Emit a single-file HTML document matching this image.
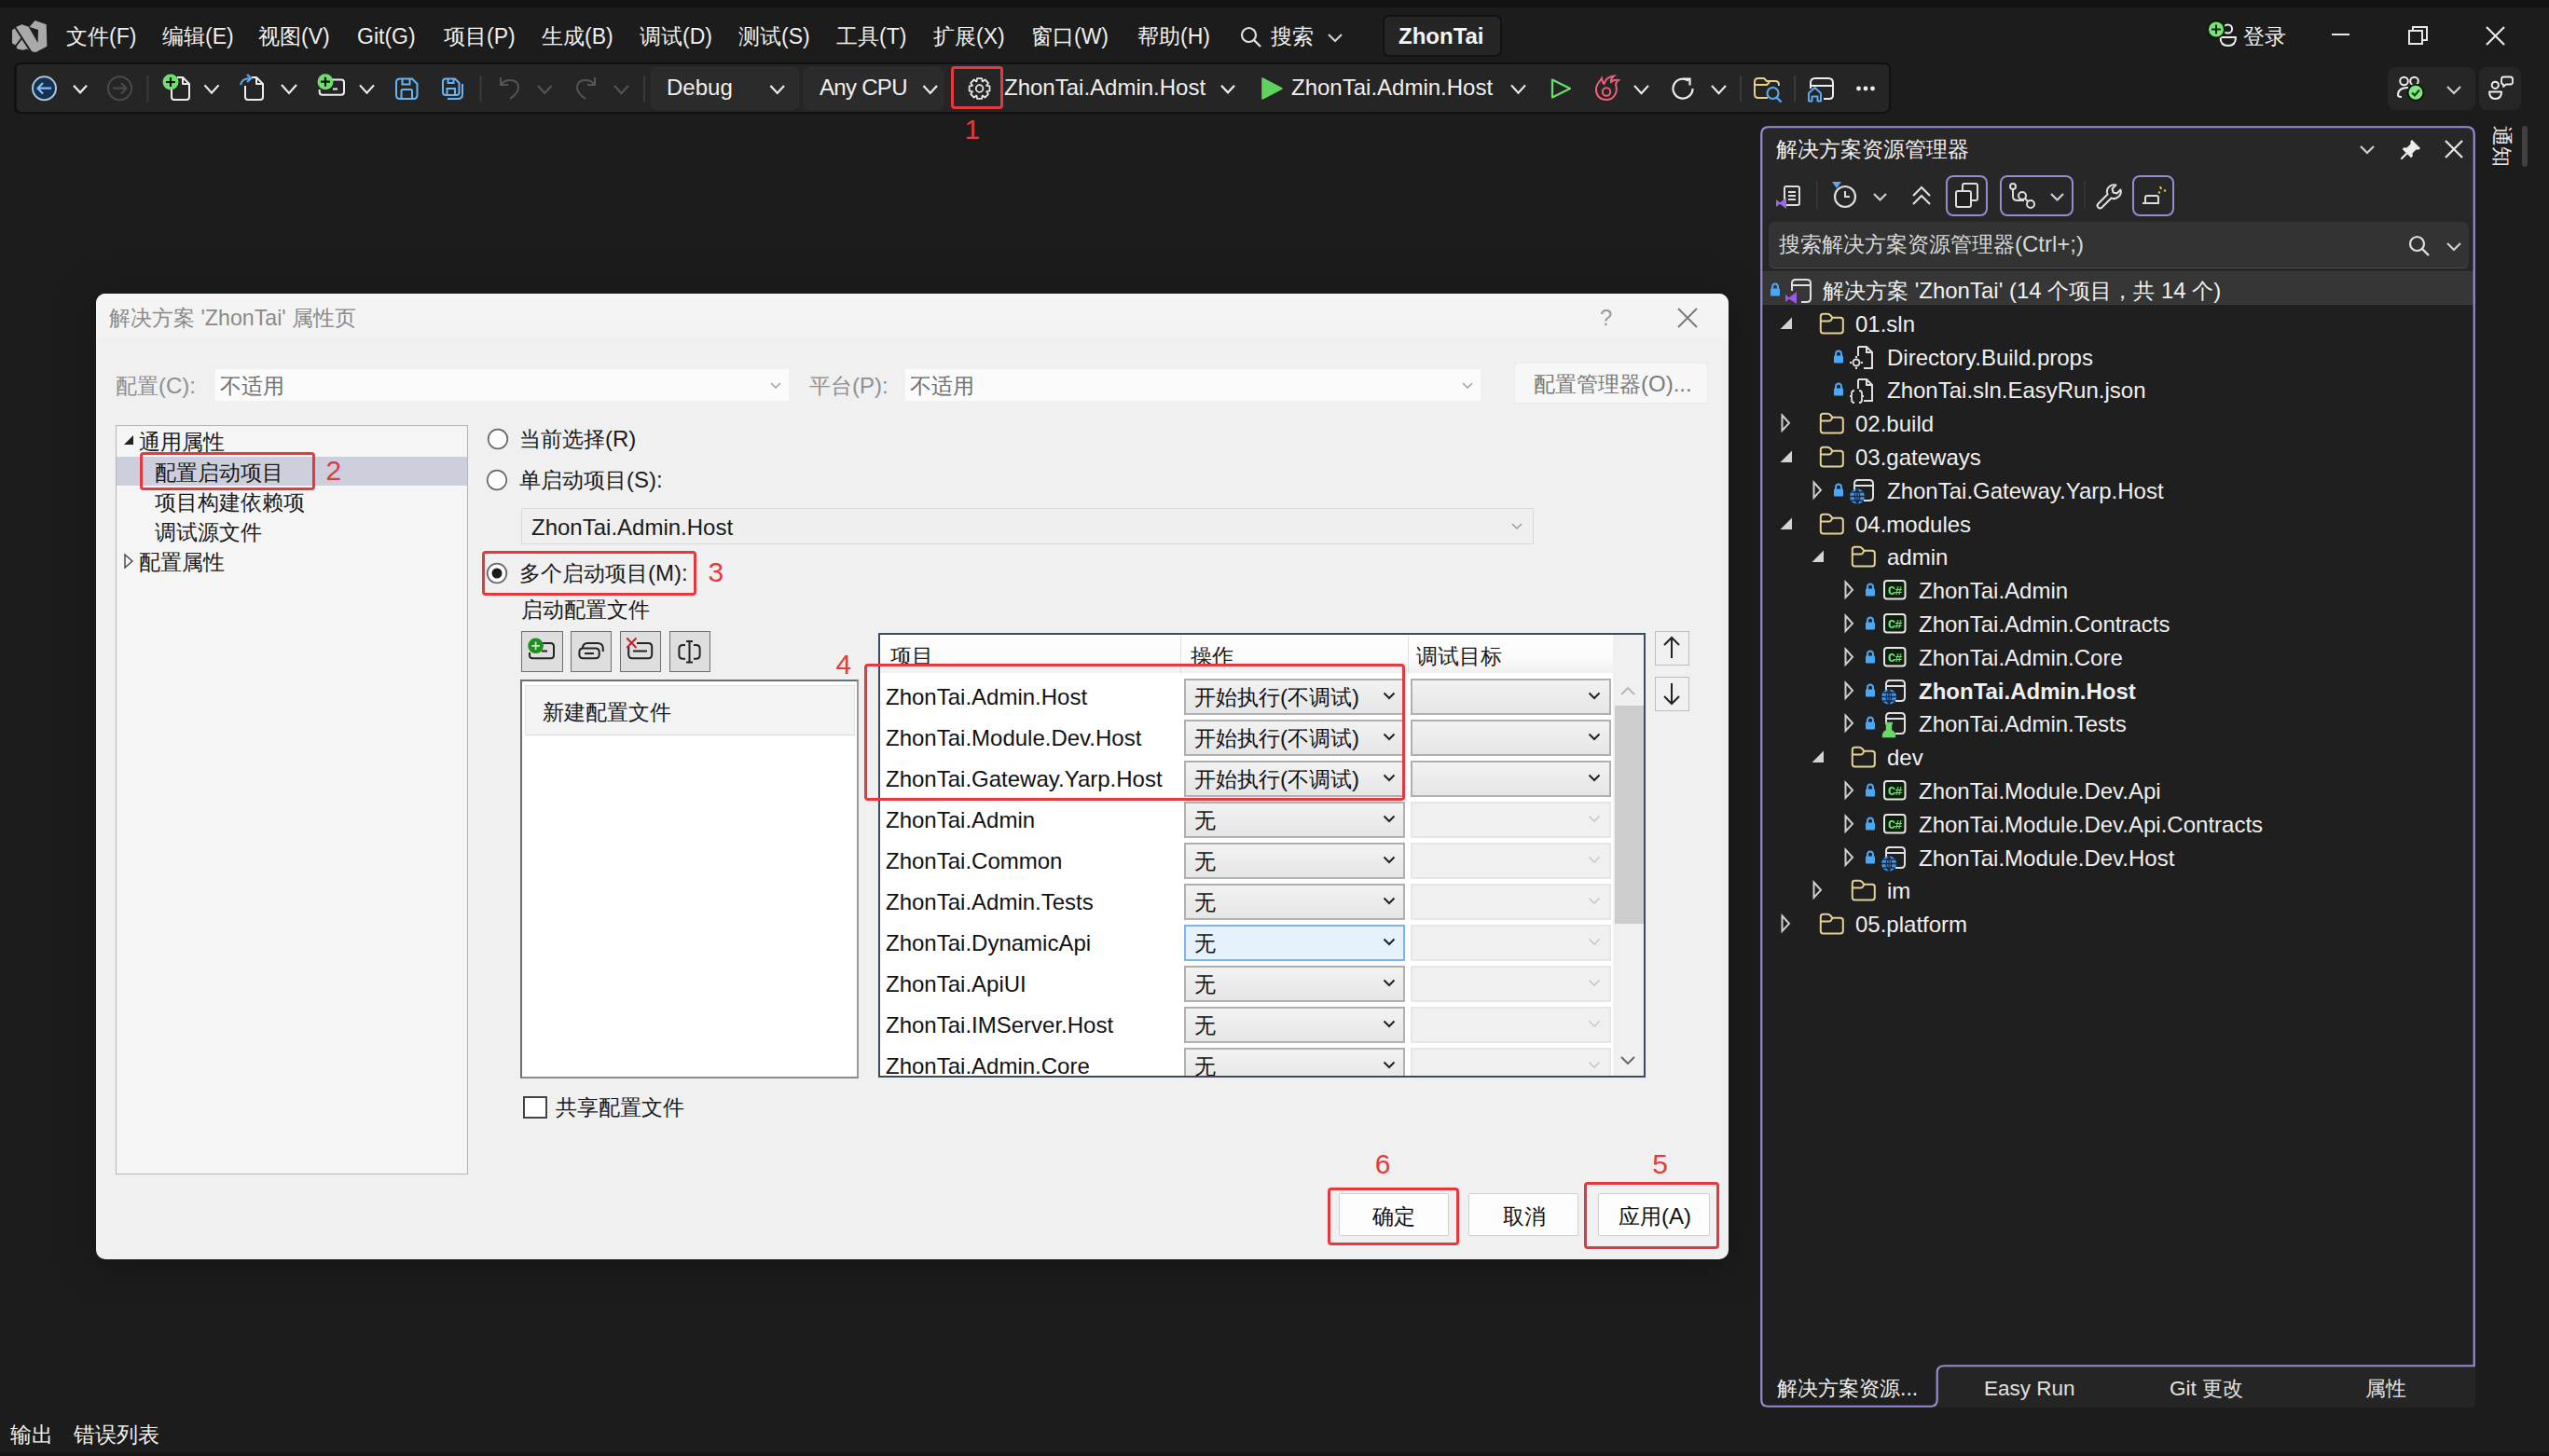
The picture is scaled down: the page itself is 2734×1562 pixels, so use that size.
<!DOCTYPE html>
<html><head><meta charset="utf-8">
<style>
html,body{margin:0;padding:0;width:2734px;height:1562px;overflow:hidden;background:#1c1c1c;font-family:"Liberation Sans",sans-serif;}
.a{position:absolute;}
.t{position:absolute;white-space:nowrap;line-height:1;}
svg{position:absolute;overflow:visible;}
</style></head><body>

<div class="a" style="left:0px;top:0px;width:2734px;height:8px;box-sizing:border-box;background:#121212"></div>
<svg style="left:0px;top:0px;" width="60" height="60" viewBox="0 0 60 60"><path fill="#a9a9a9" d="M13,32.5 L18,28.5 L23.5,26.3 L31.5,29 L37.5,22 L49.7,26.3 L50.4,49.7 L38.5,56 L35,55.5 L28.5,52.5 L25,53.8 L18.5,52.5 L17,48.5 L13,46.5 Z"/><path d="M15.6,28.5 L34,56.8" stroke="#1c1c1c" stroke-width="2"/><path d="M23.8,40.5 L15.5,51" stroke="#1c1c1c" stroke-width="2"/><path d="M11,31 L17,34 M11,47 L17,44" stroke="#1c1c1c" stroke-width="0"/><path fill="#1c1c1c" d="M30.5,28.5 L41,32 L40.6,46 Z"/></svg>
<div class="t" style="left:71px;top:28px;font-size:23px;color:#f0f0f0;"><span style="font-size:0.98em">文件</span>(F)</div>
<div class="t" style="left:174px;top:28px;font-size:23px;color:#f0f0f0;"><span style="font-size:0.98em">编辑</span>(E)</div>
<div class="t" style="left:277px;top:28px;font-size:23px;color:#f0f0f0;"><span style="font-size:0.98em">视图</span>(V)</div>
<div class="t" style="left:383px;top:28px;font-size:23px;color:#f0f0f0;">Git(G)</div>
<div class="t" style="left:476px;top:28px;font-size:23px;color:#f0f0f0;"><span style="font-size:0.98em">项目</span>(P)</div>
<div class="t" style="left:581px;top:28px;font-size:23px;color:#f0f0f0;"><span style="font-size:0.98em">生成</span>(B)</div>
<div class="t" style="left:686px;top:28px;font-size:23px;color:#f0f0f0;"><span style="font-size:0.98em">调试</span>(D)</div>
<div class="t" style="left:792px;top:28px;font-size:23px;color:#f0f0f0;"><span style="font-size:0.98em">测试</span>(S)</div>
<div class="t" style="left:897px;top:28px;font-size:23px;color:#f0f0f0;"><span style="font-size:0.98em">工具</span>(T)</div>
<div class="t" style="left:1001px;top:28px;font-size:23px;color:#f0f0f0;"><span style="font-size:0.98em">扩展</span>(X)</div>
<div class="t" style="left:1106px;top:28px;font-size:23px;color:#f0f0f0;"><span style="font-size:0.98em">窗口</span>(W)</div>
<div class="t" style="left:1220px;top:28px;font-size:23px;color:#f0f0f0;"><span style="font-size:0.98em">帮助</span>(H)</div>
<svg style="left:1330px;top:28px;" width="24" height="24" viewBox="0 0 24 24"><circle cx="9.5" cy="9.5" r="7.5" stroke="#e0e0e0" stroke-width="2.2" fill="none"/><path d="M15 15 L22 22" stroke="#e0e0e0" stroke-width="2.4"/></svg>
<div class="t" style="left:1363px;top:27px;font-size:24px;color:#f0f0f0;"><span style="font-size:0.96em">搜索</span></div>
<svg style="left:1424px;top:36px;" width="16" height="10" viewBox="0 0 16 10"><path d="M1 1 L8.0 8.0 L15 1" stroke="#d0d0d0" stroke-width="2.2" fill="none"/></svg>
<div class="a" style="left:1483px;top:16px;width:128px;height:45px;box-sizing:border-box;background:#252525;border-radius:7px;border:2px solid #121212"></div>
<div class="t" style="left:1500px;top:27px;font-size:24px;color:#f5f5f5;font-weight:bold">ZhonTai</div>
<svg style="left:0;top:0" width="2734" height="100"><circle cx="2389.5" cy="31" r="4.6" stroke="#eeeeee" stroke-width="2" fill="none"/><path d="M2381.5 40 H2398 Q2398 49 2389.75 49 Q2381.5 49 2381.5 40 Z" stroke="#eeeeee" stroke-width="2" fill="none" stroke-linejoin="round"/><circle cx="2377" cy="31.5" r="9" fill="#7ae27a" stroke="#0a1a0a" stroke-width="2"/><path d="M2377 26.5 V36.5 M2372 31.5 H2382" stroke="#0a2a0a" stroke-width="2"/></svg>
<div class="t" style="left:2406px;top:27px;font-size:24px;color:#f0f0f0;"><span style="font-size:0.96em">登录</span></div>
<div class="a" style="left:2501px;top:36px;width:19px;height:2px;box-sizing:border-box;background:#e8e8e8"></div>
<svg style="left:2583px;top:28px;" width="21" height="20" viewBox="0 0 21 20"><rect x="1" y="5" width="14" height="14" stroke="#e8e8e8" stroke-width="2" fill="none"/><path d="M5 5 V1 H20 V15 H15" stroke="#e8e8e8" stroke-width="2" fill="none"/></svg>
<svg style="left:2666px;top:28px;" width="21" height="21" viewBox="0 0 21 21"><path d="M1 1 L20 20 M20 1 L1 20" stroke="#e8e8e8" stroke-width="2.2"/></svg>
<div class="a" style="left:15px;top:67px;width:2013px;height:55px;box-sizing:border-box;background:#252525;border-radius:7px;border:2px solid #111111;border-left:3px solid #111"></div>
<svg style="left:0;top:0" width="2734" height="200"><circle cx="47.5" cy="94.7" r="12.5" stroke="#a9c4dc" stroke-width="2" fill="#173250"/><path d="M55 94.7 H40.5 M46 89 L40.5 94.7 L46 100.4" stroke="#7ec0ff" stroke-width="2.2" fill="none"/><path d="M79,91.65 L86.0,99.35 L93,91.65" stroke="#eeeeee" stroke-width="2.2" fill="none"/><circle cx="128.5" cy="94.7" r="12.5" stroke="#4a4a4a" stroke-width="2" fill="none"/><path d="M121 94.7 H135.5 M130 89 L135.5 94.7 L130 100.4" stroke="#4a4a4a" stroke-width="2.2" fill="none"/><path d="M158.5 81 V109" stroke="#3a3a3a" stroke-width="2"/><path d="M190 83 H196 L203 90 V104 Q203 107 200 107 H187 Q184 107 184 104 V96 M196 83 V90 H203" stroke="#eeeeee" stroke-width="2" fill="none" stroke-linejoin="round"/><circle cx="183" cy="88" r="8.5" fill="#6fe06f"/><path d="M183 83 V93 M178 88 H188" stroke="#111" stroke-width="2.2"/><path d="M219.5,91.375 L227.0,99.625 L234.5,91.375" stroke="#eeeeee" stroke-width="2.2" fill="none"/><path d="M270 83 H275 L282 90 V104 Q282 107 279 107 H266 Q263 107 263 104 V92 M275 83 V90 H282" stroke="#eeeeee" stroke-width="2" fill="none" stroke-linejoin="round"/><path d="M258 91 Q259 84 269 84 M265 80 L269.5 84 L265 88" stroke="#5ca8ec" stroke-width="2.2" fill="none"/><path d="M302,91.1 L310.0,99.9 L318,91.1" stroke="#eeeeee" stroke-width="2.2" fill="none"/><path d="M354 85.5 H366 Q369 85.5 369 88.5 V98.8 Q369 101.8 366 101.8 H345.7 Q342.7 101.8 342.7 98.8 V96 M357 95.5 H362" stroke="#eeeeee" stroke-width="2" fill="none"/><circle cx="349" cy="87.7" r="8.5" fill="#6fe06f"/><path d="M349 82.7 V92.7 M344 87.7 H354" stroke="#111" stroke-width="2.2"/><path d="M386,91.375 L393.5,99.625 L401,91.375" stroke="#eeeeee" stroke-width="2.2" fill="none"/><path d="M429 84.5 H442 L447.5 90 V102 Q447.5 106 443.5 106 H429 Q425 106 425 102 V88.5 Q425 84.5 429 84.5 Z M431.5 84.5 V90.5 H439.5 V84.5 M430.5 106 V97.5 Q430.5 96 432 96 H440.5 Q442 96 442 97.5 V106" stroke="#6ab4f4" stroke-width="2" fill="none"/><path d="M478 84.5 H488 L492.5 89 V99 Q492.5 102 489.5 102 H478 Q475 102 475 99 V87.5 Q475 84.5 478 84.5 Z M480.5 84.5 V89 H486.5 V84.5 M479.5 102 V95 H488 V102 M496 90 V101 Q496 106 491 106 H480" stroke="#6ab4f4" stroke-width="2" fill="none"/><path d="M515.5 81 V109" stroke="#3a3a3a" stroke-width="2"/><path d="M537 83 V91 H545 M537.5 90.5 Q541 86 547 86 Q556 86 556 94 Q556 100 547 106" stroke="#555555" stroke-width="2" fill="none"/><path d="M577,92.0125 L584.25,99.9875 L591.5,92.0125" stroke="#555555" stroke-width="2.2" fill="none"/><path d="M638 83 V91 H630 M637.5 90.5 Q634 86 628 86 Q619 86 619 94 Q619 100 628 106" stroke="#555555" stroke-width="2" fill="none"/><path d="M659,91.875 L666.5,100.125 L674,91.875" stroke="#555555" stroke-width="2.2" fill="none"/><path d="M691 81 V109" stroke="#3a3a3a" stroke-width="2"/><path d="M1061.51,92.48 L1061.51,97.52 L1058.20,98.07 L1058.15,98.20 L1060.10,100.94 L1056.54,104.50 L1053.80,102.55 L1053.67,102.60 L1053.12,105.91 L1048.08,105.91 L1047.53,102.60 L1047.40,102.55 L1044.66,104.50 L1041.10,100.94 L1043.05,98.20 L1043.00,98.07 L1039.69,97.52 L1039.69,92.48 L1043.00,91.93 L1043.05,91.80 L1041.10,89.06 L1044.66,85.50 L1047.40,87.45 L1047.53,87.40 L1048.08,84.09 L1053.12,84.09 L1053.67,87.40 L1053.80,87.45 L1056.54,85.50 L1060.10,89.06 L1058.15,91.80 L1058.20,91.93 Z" stroke="#e6e6e6" stroke-width="1.8" fill="none" stroke-linejoin="round"/><circle cx="1050.6" cy="95" r="3.8" stroke="#e6e6e6" stroke-width="1.8" fill="none"/><path d="M1310,91.65 L1317.0,99.35 L1324,91.65" stroke="#eeeeee" stroke-width="2.2" fill="none"/><path d="M1354 84 L1375 95 L1354 106 Z" fill="#5fd35f" stroke="#5fd35f" stroke-width="1.5" stroke-linejoin="round"/><path d="M1621,91.375 L1628.5,99.625 L1636,91.375" stroke="#eeeeee" stroke-width="2.2" fill="none"/><path d="M1665 85.5 L1684 95 L1665 104.5 Z" stroke="#6edc6e" stroke-width="2.2" fill="none" stroke-linejoin="round"/><path d="M1723 107 C1715 107 1711.5 101 1712 95 C1712.5 90 1716 87 1718 84 C1718.5 87 1719 89 1720.5 90 C1722 85 1726 82 1731 81.5 C1728 84 1727.5 86 1728 88 C1730 86 1733 85.5 1736 86 C1733 88 1732.5 90 1733.5 93 C1735 99 1731 107 1723 107 Z" stroke="#f0607a" stroke-width="2" fill="none"/><circle cx="1723" cy="98.5" r="4.2" stroke="#f0607a" stroke-width="2" fill="none"/><path d="M1753,91.875 L1760.5,100.125 L1768,91.875" stroke="#eeeeee" stroke-width="2.2" fill="none"/><path d="M1815.5 95 A10.5 10.5 0 1 1 1811 86.5 M1805.5 84.5 L1812.5 84.5 L1812.5 91.5" stroke="#eeeeee" stroke-width="2.2" fill="none"/><path d="M1836,91.875 L1843.5,100.125 L1851,91.875" stroke="#eeeeee" stroke-width="2.2" fill="none"/><path d="M1867 81 V109" stroke="#3a3a3a" stroke-width="2"/><path d="M1896 105 H1886 Q1882 105 1882 101 V88 Q1882 84 1886 84 H1892 L1895 87 H1904 Q1908 87 1908 91 V92 M1882 91 H1895 L1898 88" stroke="#e8d08a" stroke-width="2" fill="none"/><circle cx="1901.5" cy="100" r="6" stroke="#5ca8ec" stroke-width="2.2" fill="none"/><path d="M1905.5 104.5 L1910.5 109.5" stroke="#5ca8ec" stroke-width="2.4"/><path d="M1925 81 V109" stroke="#3a3a3a" stroke-width="2"/><path d="M1942 95 V89 Q1942 84 1947 84 H1961 Q1966 84 1966 89 V102 Q1966 106 1962 106 H1956 M1942 92 H1966" stroke="#eeeeee" stroke-width="2" fill="none"/><path d="M1940 108.5 V100 L1946.5 94 L1953 100 V108.5 H1949.5 V103.5 H1943.5 V108.5 Z" stroke="#5ca8ec" stroke-width="2" fill="none" stroke-linejoin="round"/><circle cx="1993.5" cy="95" r="2.4" fill="#eeeeee"/><circle cx="2001" cy="95" r="2.4" fill="#eeeeee"/><circle cx="2008.5" cy="95" r="2.4" fill="#eeeeee"/><path d="M2589 96 Q2580 96 2580 106 V108" stroke="#ddd" stroke-width="0"/></svg>
<div class="a" style="left:698px;top:72px;width:159px;height:46px;box-sizing:border-box;background:#2b2b2b;border-radius:7px;border:1px solid #2f2f2f"></div>
<div class="t" style="left:715px;top:82px;font-size:24px;color:#f0f0f0;">Debug</div>
<svg style="left:0;top:0" width="2734" height="200"><path d="M826.5,92.0125 L833.75,99.9875 L841,92.0125" stroke="#eeeeee" stroke-width="2.2" fill="none"/></svg>
<div class="a" style="left:862px;top:72px;width:150px;height:46px;box-sizing:border-box;background:#2b2b2b;border-radius:7px;border:1px solid #2f2f2f"></div>
<div class="t" style="left:879px;top:82px;font-size:24px;color:#f0f0f0;letter-spacing:-0.7px">Any CPU</div>
<svg style="left:0;top:0" width="2734" height="200"><path d="M990.5,92.0125 L997.75,99.9875 L1005,92.0125" stroke="#eeeeee" stroke-width="2.2" fill="none"/></svg>
<div class="t" style="left:1077px;top:82px;font-size:24px;color:#f0f0f0;">ZhonTai.Admin.Host</div>
<div class="t" style="left:1385px;top:82px;font-size:24px;color:#f0f0f0;">ZhonTai.Admin.Host</div>
<div class="a" style="left:2561px;top:72px;width:94px;height:46px;box-sizing:border-box;background:#262626;border-radius:8px"></div>
<svg style="left:0;top:0" width="2734" height="200"><circle cx="2578.5" cy="87" r="4.3" stroke="#eeeeee" stroke-width="2" fill="none"/><circle cx="2589.5" cy="87" r="4.3" stroke="#eeeeee" stroke-width="2" fill="none"/><path d="M2583 94 Q2572 94 2572 102 Q2572 104 2576 104" stroke="#eeeeee" stroke-width="2" fill="none"/><circle cx="2591" cy="99.3" r="8.5" fill="#86e486" stroke="#0b1a0b" stroke-width="2"/><path d="M2587 99.5 L2590 102.3 L2595 96.5" stroke="#0d4f0d" stroke-width="2.2" fill="none"/></svg>
<svg style="left:2624px;top:92px;" width="16" height="10" viewBox="0 0 16 10"><path d="M1 1 L8.0 8.0 L15 1" stroke="#d0d0d0" stroke-width="2.2" fill="none"/></svg>
<div class="a" style="left:2659px;top:72px;width:45px;height:46px;box-sizing:border-box;background:#262626;border-radius:8px"></div>
<svg style="left:0;top:0" width="2734" height="200"><circle cx="2676.3" cy="91.3" r="3.6" stroke="#eeeeee" stroke-width="2" fill="none"/><path d="M2670 98.5 H2683 Q2683 106 2676.5 106 Q2670 106 2670 98.5 Z" stroke="#eeeeee" stroke-width="2" fill="none" stroke-linejoin="round"/><path d="M2685.5 82.5 H2692.5 Q2695 82.5 2695 85 V88 Q2695 90.5 2692.5 90.5 H2688 L2685 93 V90.5 Q2683 90.5 2683 88 V85 Q2683 82.5 2685.5 82.5 Z" stroke="#eeeeee" stroke-width="1.8" fill="none" stroke-linejoin="round"/></svg>
<div class="a" style="left:1020px;top:71px;width:56px;height:46px;box-sizing:border-box;border:3px solid #e8383d;border-radius:4px"></div>
<div class="t" style="left:1034.5px;top:124px;font-size:30px;color:#e8383d;">1</div>
<div class="a" style="left:103px;top:315px;width:1751px;height:1036px;background:#f0f0f0;border-radius:10px;box-shadow:0 6px 40px 6px rgba(0,0,0,0.22)"></div>
<div class="a" style="left:103px;top:315px;width:1751px;height:48px;box-sizing:border-box;background:linear-gradient(#f5f5f5,#f2f2f2);border-radius:10px 10px 0 0"></div>
<div class="t" style="left:117px;top:330px;font-size:23.2px;color:#8a8a8a;"><span style="font-size:0.99em">解决方案</span> 'ZhonTai' <span style="font-size:0.99em">属性页</span></div>
<div class="t" style="left:1716px;top:329px;font-size:24px;color:#9a9a9a;">?</div>
<svg style="left:1799px;top:330px;" width="22" height="22" viewBox="0 0 22 22"><path d="M1 1 L21 21 M21 1 L1 21" stroke="#777" stroke-width="1.8"/></svg>
<div class="t" style="left:124px;top:402px;font-size:24px;color:#8f8f8f;"><span style="font-size:0.96em">配置</span>(C):</div>
<div class="a" style="left:230px;top:395px;width:617px;height:36px;box-sizing:border-box;background:#fbfbfb;border:1px solid #f2f2f2"></div>
<div class="t" style="left:236px;top:402px;font-size:24px;color:#707070;"><span style="font-size:0.96em">不适用</span></div>
<svg style="left:826px;top:410px;" width="12" height="8" viewBox="0 0 12 8"><path d="M1 1 L6.0 6.0 L11 1" stroke="#a0a0a0" stroke-width="1.5" fill="none"/></svg>
<div class="t" style="left:868px;top:402px;font-size:24px;color:#8f8f8f;"><span style="font-size:0.96em">平台</span>(P):</div>
<div class="a" style="left:970px;top:395px;width:619px;height:36px;box-sizing:border-box;background:#fbfbfb;border:1px solid #f2f2f2"></div>
<div class="t" style="left:976px;top:402px;font-size:24px;color:#707070;"><span style="font-size:0.96em">不适用</span></div>
<svg style="left:1568px;top:410px;" width="12" height="8" viewBox="0 0 12 8"><path d="M1 1 L6.0 6.0 L11 1" stroke="#a0a0a0" stroke-width="1.5" fill="none"/></svg>
<div class="a" style="left:1624px;top:389px;width:208px;height:44px;box-sizing:border-box;background:#f7f7f7;border:1px solid #ececec"></div>
<div class="t" style="left:1645px;top:400px;font-size:24px;color:#7a7a7a;"><span style="font-size:0.96em">配置管理器</span>(O)...</div>
<div class="a" style="left:124px;top:456px;width:378px;height:804px;box-sizing:border-box;background:#f5f5f5;border:1px solid #b4b4b4"></div>
<div class="a" style="left:125px;top:490px;width:376px;height:31px;box-sizing:border-box;background:#cdd0dc"></div>
<svg style="left:132px;top:466px;" width="12" height="12" viewBox="0 0 12 12"><path d="M11 1 V11 H1 Z" fill="#222"/></svg>
<div class="t" style="left:149px;top:462px;font-size:24px;color:#1a1a1a;"><span style="font-size:0.96em">通用属性</span></div>
<div class="t" style="left:166px;top:495px;font-size:24px;color:#1a1a1a;"><span style="font-size:0.96em">配置启动项目</span></div>
<div class="t" style="left:166px;top:527px;font-size:24px;color:#1a1a1a;"><span style="font-size:0.96em">项目构建依赖项</span></div>
<div class="t" style="left:166px;top:559px;font-size:24px;color:#1a1a1a;"><span style="font-size:0.96em">调试源文件</span></div>
<svg style="left:133px;top:594px;" width="10" height="16" viewBox="0 0 10 16"><path d="M1 1 L9 8 L1 15 Z" stroke="#444" stroke-width="1.4" fill="none"/></svg>
<div class="t" style="left:149px;top:591px;font-size:24px;color:#1a1a1a;"><span style="font-size:0.96em">配置属性</span></div>
<div class="a" style="left:150px;top:485px;width:188px;height:41px;box-sizing:border-box;border:3px solid #e8383d;border-radius:4px"></div>
<div class="t" style="left:349.5px;top:490px;font-size:30px;color:#e8383d;">2</div>
<svg style="left:521.7px;top:458.5px;" width="24" height="24" viewBox="0 0 24 24"><circle cx="12" cy="12" r="10.3" stroke="#6a6a6a" stroke-width="1.7" fill="#fff"/></svg>
<div class="t" style="left:557px;top:459px;font-size:24px;color:#1a1a1a;"><span style="font-size:0.96em">当前选择</span>(R)</div>
<svg style="left:521px;top:503px;" width="24" height="24" viewBox="0 0 24 24"><circle cx="12" cy="12" r="10.3" stroke="#6a6a6a" stroke-width="1.7" fill="#fff"/></svg>
<div class="t" style="left:557px;top:503px;font-size:24px;color:#1a1a1a;"><span style="font-size:0.96em">单启动项目</span>(S):</div>
<div class="a" style="left:559px;top:545px;width:1086px;height:39px;box-sizing:border-box;background:#efefef;border:1px solid #d9d9d9"></div>
<div class="t" style="left:570px;top:554px;font-size:24px;color:#1a1a1a;">ZhonTai.Admin.Host</div>
<svg style="left:1621px;top:561px;" width="12" height="8" viewBox="0 0 12 8"><path d="M1 1 L6.0 6.0 L11 1" stroke="#9a9a9a" stroke-width="1.5" fill="none"/></svg>
<svg style="left:521px;top:603px;" width="24" height="24" viewBox="0 0 24 24"><circle cx="12" cy="12" r="10.3" stroke="#6a6a6a" stroke-width="1.8" fill="#fff"/><circle cx="12" cy="12" r="5.5" fill="#1a1a1a"/></svg>
<div class="t" style="left:557px;top:603px;font-size:24px;color:#1a1a1a;"><span style="font-size:0.96em">多个启动项目</span>(M):</div>
<div class="a" style="left:517px;top:591px;width:230px;height:48px;box-sizing:border-box;border:3px solid #e8383d;border-radius:4px"></div>
<div class="t" style="left:759.5px;top:599px;font-size:30px;color:#e8383d;">3</div>
<div class="t" style="left:559px;top:642px;font-size:24px;color:#1a1a1a;"><span style="font-size:0.96em">启动配置文件</span></div>
<div class="a" style="left:559px;top:676.5px;width:44.5px;height:44.5px;box-sizing:border-box;background:#dedede;border:1.5px solid #6e6e6e"></div>
<div class="a" style="left:611.5px;top:676.5px;width:44.5px;height:44.5px;box-sizing:border-box;background:#dedede;border:1.5px solid #6e6e6e"></div>
<div class="a" style="left:664.5px;top:676.5px;width:44.5px;height:44.5px;box-sizing:border-box;background:#dedede;border:1.5px solid #6e6e6e"></div>
<div class="a" style="left:717.5px;top:676.5px;width:44.5px;height:44.5px;box-sizing:border-box;background:#dedede;border:1.5px solid #6e6e6e"></div>
<svg style="left:0;top:0" width="2734" height="1562"><path d="M577 690 H590.5 Q594 690 594 693.5 V702.7 Q594 706.2 590.5 706.2 H571.5 Q568 706.2 568 702.7 V700 M581 698.5 H587" stroke="#222" stroke-width="2" fill="none"/><circle cx="574.6" cy="692.8" r="8.3" fill="#1f8f1f"/><path d="M574.6 688.5 V697 M570.3 692.8 H578.9" stroke="#bff0bf" stroke-width="1.8"/><path d="M625 706.2 H638.7 Q642.7 706.2 642.7 702.2 V699.6 Q642.7 695.6 638.7 695.6 H625.4 Q621.4 695.6 621.4 699.6 V702.2 Q621.4 706.2 625.4 706.2 Z M627 701 H637 M625 695.6 Q625 690 630 690 H640.8 Q646.8 690 646.8 696 V699" stroke="#222" stroke-width="2" fill="none"/><path d="M678 706.2 H695.2 Q699.2 706.2 699.2 702.2 V694 Q699.2 690 695.2 690 H683 M674.2 694 V702.2 Q674.2 706.2 678.2 706.2 M679 698.5 H694" stroke="#222" stroke-width="2" fill="none"/><path d="M672.3 684.5 L682.5 695 M682.5 684.5 L672.3 695" stroke="#c81e2e" stroke-width="2"/><path d="M739.5 688 V710.4 M736 688 H743 M736 710.4 H743 M735 692 H732.4 Q728.4 692 728.4 696 V702.7 Q728.4 706.7 732.4 706.7 H735 M744 692 H746.6 Q750.6 692 750.6 696 V702.7 Q750.6 706.7 746.6 706.7 H744" stroke="#222" stroke-width="2" fill="none"/></svg>
<div class="a" style="left:558px;top:729px;width:363px;height:428px;box-sizing:border-box;background:#fff;border:2px solid #6e6e6e;border-right-color:#9a9a9a;border-bottom-color:#8a8a8a"></div>
<div class="a" style="left:563px;top:735px;width:354px;height:54px;box-sizing:border-box;background:#f4f4f4;border:1px solid #e2e2e2;border-bottom-color:#d8d8d8"></div>
<div class="t" style="left:582px;top:752px;font-size:24px;color:#1a1a1a;"><span style="font-size:0.96em">新建配置文件</span></div>
<div class="a" style="left:561px;top:1176px;width:26px;height:24px;box-sizing:border-box;background:#fff;border:2px solid #444"></div>
<div class="t" style="left:596px;top:1176px;font-size:24px;color:#1a1a1a;"><span style="font-size:0.96em">共享配置文件</span></div>
<div class="a" style="left:942px;top:679px;width:823px;height:477px;box-sizing:border-box;background:#fff;border:2px solid #3c4c60"></div>
<div class="a" style="left:944px;top:681px;width:786px;height:41px;box-sizing:border-box;background:linear-gradient(#ffffff,#fbfbfb 60%,#f0f0f0)"></div>
<div class="a" style="left:1266px;top:683px;width:1px;height:40px;box-sizing:border-box;background:#e0e0e0"></div>
<div class="a" style="left:1510px;top:683px;width:1px;height:40px;box-sizing:border-box;background:#e0e0e0"></div>
<div class="t" style="left:955px;top:692px;font-size:24px;color:#1a1a1a;"><span style="font-size:0.96em">项目</span></div>
<div class="t" style="left:1277px;top:692px;font-size:24px;color:#1a1a1a;"><span style="font-size:0.96em">操作</span></div>
<div class="t" style="left:1519px;top:692px;font-size:24px;color:#1a1a1a;"><span style="font-size:0.96em">调试目标</span></div>
<div class="a" style="left:944px;top:722px;width:786px;height:432px;overflow:hidden">
<div class="t" style="left:6px;top:13.5px;font-size:24px;color:#111;">ZhonTai.Admin.Host</div>
<div class="a" style="left:326px;top:6px;width:237px;height:39px;box-sizing:border-box;background:linear-gradient(#f2f2f2,#e6e6e6);border:2px solid #b0b0b0"></div>
<div class="t" style="left:337px;top:13.5px;font-size:24px;color:#111;"><span style="font-size:0.96em">开始执行</span>(<span style="font-size:0.96em">不调试</span>)</div>
<svg style="left:539px;top:20px;" width="14" height="9" viewBox="0 0 14 9"><path d="M1.5 1.5 L7 7 L12.5 1.5" stroke="#222" stroke-width="2" fill="none"/></svg>
<div class="a" style="left:569px;top:6px;width:215px;height:39px;box-sizing:border-box;background:linear-gradient(#f2f2f2,#e6e6e6);border:2px solid #b0b0b0"></div>
<svg style="left:759px;top:20px;" width="14" height="9" viewBox="0 0 14 9"><path d="M1.5 1.5 L7 7 L12.5 1.5" stroke="#222" stroke-width="2" fill="none"/></svg>
<div class="t" style="left:6px;top:57.5px;font-size:24px;color:#111;">ZhonTai.Module.Dev.Host</div>
<div class="a" style="left:326px;top:50px;width:237px;height:39px;box-sizing:border-box;background:linear-gradient(#f2f2f2,#e6e6e6);border:2px solid #b0b0b0"></div>
<div class="t" style="left:337px;top:57.5px;font-size:24px;color:#111;"><span style="font-size:0.96em">开始执行</span>(<span style="font-size:0.96em">不调试</span>)</div>
<svg style="left:539px;top:64px;" width="14" height="9" viewBox="0 0 14 9"><path d="M1.5 1.5 L7 7 L12.5 1.5" stroke="#222" stroke-width="2" fill="none"/></svg>
<div class="a" style="left:569px;top:50px;width:215px;height:39px;box-sizing:border-box;background:linear-gradient(#f2f2f2,#e6e6e6);border:2px solid #b0b0b0"></div>
<svg style="left:759px;top:64px;" width="14" height="9" viewBox="0 0 14 9"><path d="M1.5 1.5 L7 7 L12.5 1.5" stroke="#222" stroke-width="2" fill="none"/></svg>
<div class="t" style="left:6px;top:101.5px;font-size:24px;color:#111;">ZhonTai.Gateway.Yarp.Host</div>
<div class="a" style="left:326px;top:94px;width:237px;height:39px;box-sizing:border-box;background:linear-gradient(#f2f2f2,#e6e6e6);border:2px solid #b0b0b0"></div>
<div class="t" style="left:337px;top:101.5px;font-size:24px;color:#111;"><span style="font-size:0.96em">开始执行</span>(<span style="font-size:0.96em">不调试</span>)</div>
<svg style="left:539px;top:108px;" width="14" height="9" viewBox="0 0 14 9"><path d="M1.5 1.5 L7 7 L12.5 1.5" stroke="#222" stroke-width="2" fill="none"/></svg>
<div class="a" style="left:569px;top:94px;width:215px;height:39px;box-sizing:border-box;background:linear-gradient(#f2f2f2,#e6e6e6);border:2px solid #b0b0b0"></div>
<svg style="left:759px;top:108px;" width="14" height="9" viewBox="0 0 14 9"><path d="M1.5 1.5 L7 7 L12.5 1.5" stroke="#222" stroke-width="2" fill="none"/></svg>
<div class="t" style="left:6px;top:145.5px;font-size:24px;color:#111;">ZhonTai.Admin</div>
<div class="a" style="left:326px;top:138px;width:237px;height:39px;box-sizing:border-box;background:linear-gradient(#f2f2f2,#e6e6e6);border:2px solid #b0b0b0"></div>
<div class="t" style="left:337px;top:145.5px;font-size:24px;color:#111;"><span style="font-size:0.96em">无</span></div>
<svg style="left:539px;top:152px;" width="14" height="9" viewBox="0 0 14 9"><path d="M1.5 1.5 L7 7 L12.5 1.5" stroke="#222" stroke-width="2" fill="none"/></svg>
<div class="a" style="left:569px;top:138px;width:215px;height:39px;box-sizing:border-box;background:#f0f0f0;border:2px solid #e6e6e6"></div>
<svg style="left:759px;top:152px;" width="14" height="9" viewBox="0 0 14 9"><path d="M1.5 1.5 L7 7 L12.5 1.5" stroke="#c8c8c8" stroke-width="1.6" fill="none"/></svg>
<div class="t" style="left:6px;top:189.5px;font-size:24px;color:#111;">ZhonTai.Common</div>
<div class="a" style="left:326px;top:182px;width:237px;height:39px;box-sizing:border-box;background:linear-gradient(#f2f2f2,#e6e6e6);border:2px solid #b0b0b0"></div>
<div class="t" style="left:337px;top:189.5px;font-size:24px;color:#111;"><span style="font-size:0.96em">无</span></div>
<svg style="left:539px;top:196px;" width="14" height="9" viewBox="0 0 14 9"><path d="M1.5 1.5 L7 7 L12.5 1.5" stroke="#222" stroke-width="2" fill="none"/></svg>
<div class="a" style="left:569px;top:182px;width:215px;height:39px;box-sizing:border-box;background:#f0f0f0;border:2px solid #e6e6e6"></div>
<svg style="left:759px;top:196px;" width="14" height="9" viewBox="0 0 14 9"><path d="M1.5 1.5 L7 7 L12.5 1.5" stroke="#c8c8c8" stroke-width="1.6" fill="none"/></svg>
<div class="t" style="left:6px;top:233.5px;font-size:24px;color:#111;">ZhonTai.Admin.Tests</div>
<div class="a" style="left:326px;top:226px;width:237px;height:39px;box-sizing:border-box;background:linear-gradient(#f2f2f2,#e6e6e6);border:2px solid #b0b0b0"></div>
<div class="t" style="left:337px;top:233.5px;font-size:24px;color:#111;"><span style="font-size:0.96em">无</span></div>
<svg style="left:539px;top:240px;" width="14" height="9" viewBox="0 0 14 9"><path d="M1.5 1.5 L7 7 L12.5 1.5" stroke="#222" stroke-width="2" fill="none"/></svg>
<div class="a" style="left:569px;top:226px;width:215px;height:39px;box-sizing:border-box;background:#f0f0f0;border:2px solid #e6e6e6"></div>
<svg style="left:759px;top:240px;" width="14" height="9" viewBox="0 0 14 9"><path d="M1.5 1.5 L7 7 L12.5 1.5" stroke="#c8c8c8" stroke-width="1.6" fill="none"/></svg>
<div class="t" style="left:6px;top:277.5px;font-size:24px;color:#111;">ZhonTai.DynamicApi</div>
<div class="a" style="left:326px;top:270px;width:237px;height:39px;box-sizing:border-box;background:#e5f1fb;border:2px solid #7eb4ea"></div>
<div class="t" style="left:337px;top:277.5px;font-size:24px;color:#111;"><span style="font-size:0.96em">无</span></div>
<svg style="left:539px;top:284px;" width="14" height="9" viewBox="0 0 14 9"><path d="M1.5 1.5 L7 7 L12.5 1.5" stroke="#222" stroke-width="2" fill="none"/></svg>
<div class="a" style="left:569px;top:270px;width:215px;height:39px;box-sizing:border-box;background:#f0f0f0;border:2px solid #e6e6e6"></div>
<svg style="left:759px;top:284px;" width="14" height="9" viewBox="0 0 14 9"><path d="M1.5 1.5 L7 7 L12.5 1.5" stroke="#c8c8c8" stroke-width="1.6" fill="none"/></svg>
<div class="t" style="left:6px;top:321.5px;font-size:24px;color:#111;">ZhonTai.ApiUI</div>
<div class="a" style="left:326px;top:314px;width:237px;height:39px;box-sizing:border-box;background:linear-gradient(#f2f2f2,#e6e6e6);border:2px solid #b0b0b0"></div>
<div class="t" style="left:337px;top:321.5px;font-size:24px;color:#111;"><span style="font-size:0.96em">无</span></div>
<svg style="left:539px;top:328px;" width="14" height="9" viewBox="0 0 14 9"><path d="M1.5 1.5 L7 7 L12.5 1.5" stroke="#222" stroke-width="2" fill="none"/></svg>
<div class="a" style="left:569px;top:314px;width:215px;height:39px;box-sizing:border-box;background:#f0f0f0;border:2px solid #e6e6e6"></div>
<svg style="left:759px;top:328px;" width="14" height="9" viewBox="0 0 14 9"><path d="M1.5 1.5 L7 7 L12.5 1.5" stroke="#c8c8c8" stroke-width="1.6" fill="none"/></svg>
<div class="t" style="left:6px;top:365.5px;font-size:24px;color:#111;">ZhonTai.IMServer.Host</div>
<div class="a" style="left:326px;top:358px;width:237px;height:39px;box-sizing:border-box;background:linear-gradient(#f2f2f2,#e6e6e6);border:2px solid #b0b0b0"></div>
<div class="t" style="left:337px;top:365.5px;font-size:24px;color:#111;"><span style="font-size:0.96em">无</span></div>
<svg style="left:539px;top:372px;" width="14" height="9" viewBox="0 0 14 9"><path d="M1.5 1.5 L7 7 L12.5 1.5" stroke="#222" stroke-width="2" fill="none"/></svg>
<div class="a" style="left:569px;top:358px;width:215px;height:39px;box-sizing:border-box;background:#f0f0f0;border:2px solid #e6e6e6"></div>
<svg style="left:759px;top:372px;" width="14" height="9" viewBox="0 0 14 9"><path d="M1.5 1.5 L7 7 L12.5 1.5" stroke="#c8c8c8" stroke-width="1.6" fill="none"/></svg>
<div class="t" style="left:6px;top:409.5px;font-size:24px;color:#111;">ZhonTai.Admin.Core</div>
<div class="a" style="left:326px;top:402px;width:237px;height:39px;box-sizing:border-box;background:linear-gradient(#f2f2f2,#e6e6e6);border:2px solid #b0b0b0"></div>
<div class="t" style="left:337px;top:409.5px;font-size:24px;color:#111;"><span style="font-size:0.96em">无</span></div>
<svg style="left:539px;top:416px;" width="14" height="9" viewBox="0 0 14 9"><path d="M1.5 1.5 L7 7 L12.5 1.5" stroke="#222" stroke-width="2" fill="none"/></svg>
<div class="a" style="left:569px;top:402px;width:215px;height:39px;box-sizing:border-box;background:#f0f0f0;border:2px solid #e6e6e6"></div>
<svg style="left:759px;top:416px;" width="14" height="9" viewBox="0 0 14 9"><path d="M1.5 1.5 L7 7 L12.5 1.5" stroke="#c8c8c8" stroke-width="1.6" fill="none"/></svg>
</div>
<div class="a" style="left:1730px;top:681px;width:33px;height:473px;box-sizing:border-box;background:#f0f0f0"></div>
<svg style="left:1738px;top:736px;" width="16" height="10" viewBox="0 0 16 10"><path d="M1 9 L8 2 L15 9" stroke="#b5b5b5" stroke-width="1.8" fill="none"/></svg>
<div class="a" style="left:1732px;top:757px;width:31px;height:234px;box-sizing:border-box;background:#cdcdcd"></div>
<svg style="left:1738px;top:1133px;" width="16" height="10" viewBox="0 0 16 10"><path d="M1 1 L8 8 L15 1" stroke="#606060" stroke-width="1.8" fill="none"/></svg>
<div class="a" style="left:1775px;top:677px;width:37px;height:37px;box-sizing:border-box;background:#f0f0f0;border:1px solid #bdbdbd"></div>
<svg style="left:1783px;top:682px;" width="20" height="26" viewBox="0 0 20 26"><path d="M10 24 V2 M2 10 L10 2 L18 10" stroke="#222" stroke-width="2" fill="none"/></svg>
<div class="a" style="left:1775px;top:726px;width:37px;height:37px;box-sizing:border-box;background:#f0f0f0;border:1px solid #bdbdbd"></div>
<svg style="left:1783px;top:731px;" width="20" height="26" viewBox="0 0 20 26"><path d="M10 2 V24 M2 16 L10 24 L18 16" stroke="#222" stroke-width="2" fill="none"/></svg>
<div class="a" style="left:927px;top:712px;width:580px;height:147px;box-sizing:border-box;border:3px solid #e8383d;border-radius:4px"></div>
<div class="t" style="left:896.6px;top:698px;font-size:30px;color:#e8383d;">4</div>
<div class="a" style="left:1436px;top:1280px;width:118px;height:46px;box-sizing:border-box;background:#fdfdfd;border:1px solid #d0d0d0;border-radius:2px"></div>
<div class="t" style="left:1472px;top:1293px;font-size:24px;color:#111;"><span style="font-size:0.96em">确定</span></div>
<div class="a" style="left:1575px;top:1280px;width:118px;height:46px;box-sizing:border-box;background:#fdfdfd;border:1px solid #d0d0d0;border-radius:2px"></div>
<div class="t" style="left:1612px;top:1293px;font-size:24px;color:#111;"><span style="font-size:0.96em">取消</span></div>
<div class="a" style="left:1714px;top:1280px;width:120px;height:46px;box-sizing:border-box;background:#fdfdfd;border:1px solid #d0d0d0;border-radius:2px"></div>
<div class="t" style="left:1736px;top:1293px;font-size:24px;color:#111;"><span style="font-size:0.96em">应用</span>(A)</div>
<div class="a" style="left:1424px;top:1274px;width:141px;height:62px;box-sizing:border-box;border:3px solid #e8383d;border-radius:4px"></div>
<div class="a" style="left:1699px;top:1268px;width:145px;height:72px;box-sizing:border-box;border:3px solid #e8383d;border-radius:4px"></div>
<div class="t" style="left:1474.7px;top:1234px;font-size:30px;color:#e8383d;">6</div>
<div class="t" style="left:1772.3px;top:1234px;font-size:30px;color:#e8383d;">5</div>
<div class="a" style="left:1888px;top:135px;width:767px;height:1329px;box-sizing:border-box;background:#1f1f1f;border-radius:8px 8px 0 0"></div>
<div class="a" style="left:1888px;top:135px;width:767px;height:99px;box-sizing:border-box;background:#272727;border-radius:8px 8px 0 0"></div>
<div class="a" style="left:1888px;top:234px;width:767px;height:57px;box-sizing:border-box;background:#262626"></div>
<div class="t" style="left:1905px;top:148px;font-size:24px;color:#f0f0f0;"><span style="font-size:0.96em">解决方案资源管理器</span></div>
<svg style="left:2531px;top:156px;" width="16" height="10" viewBox="0 0 16 10"><path d="M1 1 L8.0 8.0 L15 1" stroke="#d0d0d0" stroke-width="2.2" fill="none"/></svg>
<svg style="left:2575px;top:149px;" width="22" height="22" viewBox="0 0 22 22"><path d="M12 1 L21 10 L19.5 11.5 L16.5 11.5 L12.5 15.5 L12.8 18.5 L11 20.3 L1.7 11 L3.5 9.2 L6.5 9.5 L10.5 5.5 L10.5 2.5 Z" fill="#ececec"/><path d="M6 16 L1 21" stroke="#ececec" stroke-width="2.2" stroke-linecap="round"/></svg>
<svg style="left:2622px;top:150px;" width="20" height="20" viewBox="0 0 20 20"><path d="M1 1 L19 19 M19 1 L1 19" stroke="#e8e8e8" stroke-width="2.2"/></svg>
<svg style="left:1904px;top:198px;" width="28" height="26" viewBox="0 0 28 26"><rect x="10" y="2" width="16" height="20" rx="2" stroke="#ddd" stroke-width="2" fill="none"/><path d="M14 8 H22 M14 12 H22 M14 16 H22" stroke="#ddd" stroke-width="2"/><path d="M1 16 L6 20 L1 24 Z M4 20 L12 14 V26 Z" fill="#9a6ae0"/></svg>
<div class="a" style="left:1948px;top:194px;width:2px;height:30px;box-sizing:border-box;background:#333"></div>
<svg style="left:1964px;top:194px;" width="28" height="30" viewBox="0 0 28 30"><circle cx="15" cy="17" r="11" stroke="#ddd" stroke-width="2.2" fill="none"/><path d="M15 11 V17 H20" stroke="#ddd" stroke-width="2" fill="none"/><path d="M1 1 H11 L6 8 Z" fill="#5aa8f0"/></svg>
<svg style="left:2009px;top:207px;" width="15" height="9" viewBox="0 0 15 9"><path d="M1 1 L7.5 7.5 L14 1" stroke="#d0d0d0" stroke-width="2.2" fill="none"/></svg>
<svg style="left:2051px;top:199px;" width="20" height="22" viewBox="0 0 20 22"><path d="M1 11 L10 2 L19 11 M1 20 L10 11 L19 20" stroke="#ddd" stroke-width="2.2" fill="none"/></svg>
<div class="a" style="left:2087px;top:188px;width:45px;height:44px;box-sizing:border-box;border:2.5px solid #948bd0;border-radius:8px"></div>
<svg style="left:2096px;top:196px;" width="28" height="28" viewBox="0 0 28 28"><rect x="9" y="1" width="16" height="18" rx="2" stroke="#ddd" stroke-width="2" fill="none"/><rect x="2" y="9" width="16" height="17" rx="2" stroke="#ddd" stroke-width="2" fill="#1f1f1f"/></svg>
<div class="a" style="left:2145px;top:188px;width:79px;height:44px;box-sizing:border-box;border:2.5px solid #948bd0;border-radius:8px"></div>
<svg style="left:2155px;top:196px;" width="30" height="28" viewBox="0 0 30 28"><circle cx="4" cy="4" r="3" stroke="#ddd" stroke-width="2" fill="none"/><path d="M4 7 V15 Q4 19 9 19 H16" stroke="#ddd" stroke-width="2" fill="none"/><circle cx="14" cy="14" r="4" stroke="#ddd" stroke-width="2" fill="none"/><circle cx="23" cy="23" r="4" stroke="#ddd" stroke-width="2" fill="none"/><path d="M17 17 L20 20" stroke="#ddd" stroke-width="2"/></svg>
<svg style="left:2199px;top:207px;" width="15" height="9" viewBox="0 0 15 9"><path d="M1 1 L7.5 7.5 L14 1" stroke="#d0d0d0" stroke-width="2.2" fill="none"/></svg>
<div class="a" style="left:2235px;top:194px;width:2px;height:30px;box-sizing:border-box;background:#333"></div>
<svg style="left:0;top:0" width="2734" height="300"><path d="M2250.5,218.5 L2260.5,208.5 A7.5,7.5 0 0 1 2269.5,198.5 L2265.5,202.5 L2266.5,206.5 L2270.5,207.5 L2274.5,203.5 A7.5,7.5 0 0 1 2264.5,212.5 L2254.5,222.5 A2.8,2.8 0 0 1 2250.5,218.5 Z" stroke="#e0e0e0" stroke-width="2" fill="none" stroke-linejoin="round"/></svg>
<div class="a" style="left:2287px;top:188px;width:45px;height:44px;box-sizing:border-box;border:2.5px solid #948bd0;border-radius:8px"></div>
<svg style="left:2295px;top:198px;" width="30" height="24" viewBox="0 0 30 24"><path d="M3 20 H20 V14 Q20 12 18 12 H8 Q6 12 6 14 V20" stroke="#ddd" stroke-width="2" fill="none"/><path d="M22 2 L23 5 M26 6 L28 7 M20 8 L22 9" stroke="#e6c84a" stroke-width="2"/></svg>
<div class="a" style="left:1897px;top:238px;width:751px;height:50px;box-sizing:border-box;background:#333333;border-radius:6px;border-bottom:1.5px solid #474747"></div>
<div class="t" style="left:1908px;top:250px;font-size:24px;color:#d8d8d8;"><span style="font-size:0.96em">搜索解决方案资源管理器</span>(Ctrl+;)</div>
<svg style="left:2583px;top:252px;" width="24" height="24" viewBox="0 0 24 24"><circle cx="9.5" cy="9.5" r="7.5" stroke="#e0e0e0" stroke-width="2.2" fill="none"/><path d="M15 15 L22 22" stroke="#e0e0e0" stroke-width="2.4"/></svg>
<svg style="left:2624px;top:260px;" width="16" height="10" viewBox="0 0 16 10"><path d="M1 1 L8.0 8.0 L15 1" stroke="#d0d0d0" stroke-width="2.2" fill="none"/></svg>
<div class="a" style="left:1890px;top:291px;width:764px;height:36px;box-sizing:border-box;background:#363636;border-top:1px solid #3c3c3c;border-bottom:1px solid #3c3c3c"></div>
<svg style="left:1898px;top:303px;" width="12" height="15" viewBox="0 0 12 15"><path d="M3 7 V5 Q3 1.5 6 1.5 Q9 1.5 9 5 V7" stroke="#4aa8f8" stroke-width="2" fill="none"/><rect x="1" y="6.5" width="10" height="8" rx="1" fill="#4aa8f8"/></svg>
<svg style="left:1914px;top:298px;" width="32" height="28" viewBox="0 0 32 28"><path d="M10 2 H24 Q28 2 28 6 V22 Q28 26 24 26 H18 M8 14 V6 Q8 2 12 2 M8 8 H28" stroke="#e0e0e0" stroke-width="2" fill="none"/><path d="M1 18 L6 22 L1 26 Z M4 22 L13 15 V28 Z" fill="#9a5ae8"/></svg>
<div class="t" style="left:1955px;top:300px;font-size:24px;color:#f0f0f0;"><span style="font-size:0.96em">解决方案</span> 'ZhonTai' (14 <span style="font-size:0.96em">个项目，共</span> 14 <span style="font-size:0.96em">个</span>)</div>
<svg style="left:1909px;top:339.5px;" width="14" height="14" viewBox="0 0 14 14"><path d="M13 0.5 V13 H0.5 Z" fill="#d4d4d4"/></svg>
<svg style="left:1951px;top:335px;" width="28" height="24" viewBox="0 0 28 24"><path d="M1.8 9 V4.5 Q1.8 1.8 4.5 1.8 H9 Q11 1.8 12.5 3.5 L14.5 5.8 H23 Q25.8 5.8 25.8 8.5 V19.8 Q25.8 22.5 23 22.5 H4.5 Q1.8 22.5 1.8 19.8 Z M1.8 9.5 H10.5 Q12 9.5 13 8.3 L14.5 5.8" stroke="#e4d196" stroke-width="2" fill="none" stroke-linejoin="round"/></svg>
<div class="t" style="left:1990px;top:336px;font-size:24px;color:#f0f0f0;">01.sln</div>
<svg style="left:1966px;top:375px;" width="12" height="15" viewBox="0 0 12 15"><path d="M3 7 V5 Q3 1.5 6 1.5 Q9 1.5 9 5 V7" stroke="#4aa8f8" stroke-width="2" fill="none"/><rect x="1" y="6.5" width="10" height="8" rx="1" fill="#4aa8f8"/></svg>
<svg style="left:1983px;top:370px;" width="28" height="28" viewBox="0 0 28 28"><path d="M10 2 H19 L25 8 V25 H16 M10 12 V2 M19 2 V8 H25" stroke="#e0e0e0" stroke-width="2" fill="none"/><circle cx="8" cy="19" r="3.5" stroke="#e0e0e0" stroke-width="2" fill="none"/><path d="M8 12 V14 M8 24 V26 M1 19 H3 M13 19 H15" stroke="#e0e0e0" stroke-width="2"/></svg>
<div class="t" style="left:2024px;top:372px;font-size:24px;color:#f0f0f0;">Directory.Build.props</div>
<svg style="left:1966px;top:410px;" width="12" height="15" viewBox="0 0 12 15"><path d="M3 7 V5 Q3 1.5 6 1.5 Q9 1.5 9 5 V7" stroke="#4aa8f8" stroke-width="2" fill="none"/><rect x="1" y="6.5" width="10" height="8" rx="1" fill="#4aa8f8"/></svg>
<svg style="left:1983px;top:405px;" width="28" height="28" viewBox="0 0 28 28"><path d="M10 2 H19 L25 8 V25 H16 M10 12 V2 M19 2 V8 H25" stroke="#e0e0e0" stroke-width="2" fill="none"/><path d="M6 14 Q3 14 3 17 V19 Q3 20 1 20 Q3 20 3 21 V24 Q3 27 6 27 M11 14 Q14 14 14 17 V19 Q14 20 16 20 Q14 20 14 21 V24 Q14 27 11 27" stroke="#e0e0e0" stroke-width="1.8" fill="none"/></svg>
<div class="t" style="left:2024px;top:407px;font-size:24px;color:#f0f0f0;">ZhonTai.sln.EasyRun.json</div>
<svg style="left:1910px;top:443.5px;" width="12" height="20" viewBox="0 0 12 20"><path d="M1.5 1.5 L9 9.8 L1.5 18 Z" stroke="#d0d0d0" stroke-width="2" fill="none" stroke-linejoin="miter"/></svg>
<svg style="left:1951px;top:442px;" width="28" height="24" viewBox="0 0 28 24"><path d="M1.8 9 V4.5 Q1.8 1.8 4.5 1.8 H9 Q11 1.8 12.5 3.5 L14.5 5.8 H23 Q25.8 5.8 25.8 8.5 V19.8 Q25.8 22.5 23 22.5 H4.5 Q1.8 22.5 1.8 19.8 Z M1.8 9.5 H10.5 Q12 9.5 13 8.3 L14.5 5.8" stroke="#e4d196" stroke-width="2" fill="none" stroke-linejoin="round"/></svg>
<div class="t" style="left:1990px;top:443px;font-size:24px;color:#f0f0f0;">02.build</div>
<svg style="left:1909px;top:482.5px;" width="14" height="14" viewBox="0 0 14 14"><path d="M13 0.5 V13 H0.5 Z" fill="#d4d4d4"/></svg>
<svg style="left:1951px;top:478px;" width="28" height="24" viewBox="0 0 28 24"><path d="M1.8 9 V4.5 Q1.8 1.8 4.5 1.8 H9 Q11 1.8 12.5 3.5 L14.5 5.8 H23 Q25.8 5.8 25.8 8.5 V19.8 Q25.8 22.5 23 22.5 H4.5 Q1.8 22.5 1.8 19.8 Z M1.8 9.5 H10.5 Q12 9.5 13 8.3 L14.5 5.8" stroke="#e4d196" stroke-width="2" fill="none" stroke-linejoin="round"/></svg>
<div class="t" style="left:1990px;top:479px;font-size:24px;color:#f0f0f0;">03.gateways</div>
<svg style="left:1944px;top:515.5px;" width="12" height="20" viewBox="0 0 12 20"><path d="M1.5 1.5 L9 9.8 L1.5 18 Z" stroke="#d0d0d0" stroke-width="2" fill="none" stroke-linejoin="miter"/></svg>
<svg style="left:1966px;top:518px;" width="12" height="15" viewBox="0 0 12 15"><path d="M3 7 V5 Q3 1.5 6 1.5 Q9 1.5 9 5 V7" stroke="#4aa8f8" stroke-width="2" fill="none"/><rect x="1" y="6.5" width="10" height="8" rx="1" fill="#4aa8f8"/></svg>
<svg style="left:1983px;top:513px;" width="28" height="28" viewBox="0 0 28 28"><path d="M8 2 H22 Q26 2 26 6 V20 Q26 24 22 24 H16 M6 14 V6 Q6 2 10 2 M6 8 H26" stroke="#e0e0e0" stroke-width="2" fill="none"/><circle cx="9" cy="19.5" r="8" fill="#3d94ec"/><path d="M1 19.5 H17 M9 11.5 V27.5 M9 11.5 Q3.5 19.5 9 27.5 Q14.5 19.5 9 11.5 M2.5 15 H15.5 M2.5 24 H15.5" stroke="#1a2a44" stroke-width="1.3" fill="none"/></svg>
<div class="t" style="left:2024px;top:515px;font-size:24px;color:#f0f0f0;">ZhonTai.Gateway.Yarp.Host</div>
<svg style="left:1909px;top:554.5px;" width="14" height="14" viewBox="0 0 14 14"><path d="M13 0.5 V13 H0.5 Z" fill="#d4d4d4"/></svg>
<svg style="left:1951px;top:550px;" width="28" height="24" viewBox="0 0 28 24"><path d="M1.8 9 V4.5 Q1.8 1.8 4.5 1.8 H9 Q11 1.8 12.5 3.5 L14.5 5.8 H23 Q25.8 5.8 25.8 8.5 V19.8 Q25.8 22.5 23 22.5 H4.5 Q1.8 22.5 1.8 19.8 Z M1.8 9.5 H10.5 Q12 9.5 13 8.3 L14.5 5.8" stroke="#e4d196" stroke-width="2" fill="none" stroke-linejoin="round"/></svg>
<div class="t" style="left:1990px;top:551px;font-size:24px;color:#f0f0f0;">04.modules</div>
<svg style="left:1943px;top:589.5px;" width="14" height="14" viewBox="0 0 14 14"><path d="M13 0.5 V13 H0.5 Z" fill="#d4d4d4"/></svg>
<svg style="left:1985px;top:585px;" width="28" height="24" viewBox="0 0 28 24"><path d="M1.8 9 V4.5 Q1.8 1.8 4.5 1.8 H9 Q11 1.8 12.5 3.5 L14.5 5.8 H23 Q25.8 5.8 25.8 8.5 V19.8 Q25.8 22.5 23 22.5 H4.5 Q1.8 22.5 1.8 19.8 Z M1.8 9.5 H10.5 Q12 9.5 13 8.3 L14.5 5.8" stroke="#e4d196" stroke-width="2" fill="none" stroke-linejoin="round"/></svg>
<div class="t" style="left:2024px;top:586px;font-size:24px;color:#f0f0f0;">admin</div>
<svg style="left:1978px;top:622.5px;" width="12" height="20" viewBox="0 0 12 20"><path d="M1.5 1.5 L9 9.8 L1.5 18 Z" stroke="#d0d0d0" stroke-width="2" fill="none" stroke-linejoin="miter"/></svg>
<svg style="left:2000px;top:625px;" width="12" height="15" viewBox="0 0 12 15"><path d="M3 7 V5 Q3 1.5 6 1.5 Q9 1.5 9 5 V7" stroke="#4aa8f8" stroke-width="2" fill="none"/><rect x="1" y="6.5" width="10" height="8" rx="1" fill="#4aa8f8"/></svg>
<svg style="left:2019px;top:621px;" width="26" height="24" viewBox="0 0 26 24"><rect x="2" y="2" width="22.5" height="19.5" rx="3" stroke="#e6e6e6" stroke-width="2" fill="#0e1f0e"/><text x="13.2" y="16.5" font-size="13.5" font-family="Liberation Mono" font-weight="bold" fill="#72e272" text-anchor="middle" letter-spacing="-1">C#</text></svg>
<div class="t" style="left:2058px;top:622px;font-size:24px;color:#f0f0f0;">ZhonTai.Admin</div>
<svg style="left:1978px;top:658.5px;" width="12" height="20" viewBox="0 0 12 20"><path d="M1.5 1.5 L9 9.8 L1.5 18 Z" stroke="#d0d0d0" stroke-width="2" fill="none" stroke-linejoin="miter"/></svg>
<svg style="left:2000px;top:661px;" width="12" height="15" viewBox="0 0 12 15"><path d="M3 7 V5 Q3 1.5 6 1.5 Q9 1.5 9 5 V7" stroke="#4aa8f8" stroke-width="2" fill="none"/><rect x="1" y="6.5" width="10" height="8" rx="1" fill="#4aa8f8"/></svg>
<svg style="left:2019px;top:657px;" width="26" height="24" viewBox="0 0 26 24"><rect x="2" y="2" width="22.5" height="19.5" rx="3" stroke="#e6e6e6" stroke-width="2" fill="#0e1f0e"/><text x="13.2" y="16.5" font-size="13.5" font-family="Liberation Mono" font-weight="bold" fill="#72e272" text-anchor="middle" letter-spacing="-1">C#</text></svg>
<div class="t" style="left:2058px;top:658px;font-size:24px;color:#f0f0f0;">ZhonTai.Admin.Contracts</div>
<svg style="left:1978px;top:694.5px;" width="12" height="20" viewBox="0 0 12 20"><path d="M1.5 1.5 L9 9.8 L1.5 18 Z" stroke="#d0d0d0" stroke-width="2" fill="none" stroke-linejoin="miter"/></svg>
<svg style="left:2000px;top:697px;" width="12" height="15" viewBox="0 0 12 15"><path d="M3 7 V5 Q3 1.5 6 1.5 Q9 1.5 9 5 V7" stroke="#4aa8f8" stroke-width="2" fill="none"/><rect x="1" y="6.5" width="10" height="8" rx="1" fill="#4aa8f8"/></svg>
<svg style="left:2019px;top:693px;" width="26" height="24" viewBox="0 0 26 24"><rect x="2" y="2" width="22.5" height="19.5" rx="3" stroke="#e6e6e6" stroke-width="2" fill="#0e1f0e"/><text x="13.2" y="16.5" font-size="13.5" font-family="Liberation Mono" font-weight="bold" fill="#72e272" text-anchor="middle" letter-spacing="-1">C#</text></svg>
<div class="t" style="left:2058px;top:694px;font-size:24px;color:#f0f0f0;">ZhonTai.Admin.Core</div>
<svg style="left:1978px;top:730.5px;" width="12" height="20" viewBox="0 0 12 20"><path d="M1.5 1.5 L9 9.8 L1.5 18 Z" stroke="#d0d0d0" stroke-width="2" fill="none" stroke-linejoin="miter"/></svg>
<svg style="left:2000px;top:733px;" width="12" height="15" viewBox="0 0 12 15"><path d="M3 7 V5 Q3 1.5 6 1.5 Q9 1.5 9 5 V7" stroke="#4aa8f8" stroke-width="2" fill="none"/><rect x="1" y="6.5" width="10" height="8" rx="1" fill="#4aa8f8"/></svg>
<svg style="left:2017px;top:728px;" width="28" height="28" viewBox="0 0 28 28"><path d="M8 2 H22 Q26 2 26 6 V20 Q26 24 22 24 H16 M6 14 V6 Q6 2 10 2 M6 8 H26" stroke="#e0e0e0" stroke-width="2" fill="none"/><circle cx="9" cy="19.5" r="8" fill="#3d94ec"/><path d="M1 19.5 H17 M9 11.5 V27.5 M9 11.5 Q3.5 19.5 9 27.5 Q14.5 19.5 9 11.5 M2.5 15 H15.5 M2.5 24 H15.5" stroke="#1a2a44" stroke-width="1.3" fill="none"/></svg>
<div class="t" style="left:2058px;top:730px;font-size:24px;color:#f0f0f0;font-weight:bold">ZhonTai.Admin.Host</div>
<svg style="left:1978px;top:765.5px;" width="12" height="20" viewBox="0 0 12 20"><path d="M1.5 1.5 L9 9.8 L1.5 18 Z" stroke="#d0d0d0" stroke-width="2" fill="none" stroke-linejoin="miter"/></svg>
<svg style="left:2000px;top:768px;" width="12" height="15" viewBox="0 0 12 15"><path d="M3 7 V5 Q3 1.5 6 1.5 Q9 1.5 9 5 V7" stroke="#4aa8f8" stroke-width="2" fill="none"/><rect x="1" y="6.5" width="10" height="8" rx="1" fill="#4aa8f8"/></svg>
<svg style="left:2017px;top:763px;" width="28" height="28" viewBox="0 0 28 28"><path d="M8 2 H22 Q26 2 26 6 V20 Q26 24 22 24 H16 M6 14 V6 Q6 2 10 2 M6 8 H26" stroke="#e0e0e0" stroke-width="2" fill="none"/><path d="M5 13 H13 M7 14 V20 H11 V14 M3 27 Q3 21 9 21 Q15 21 15 27 Z" stroke="#6cd86c" stroke-width="2.4" fill="#6cd86c"/></svg>
<div class="t" style="left:2058px;top:765px;font-size:24px;color:#f0f0f0;">ZhonTai.Admin.Tests</div>
<svg style="left:1943px;top:804.5px;" width="14" height="14" viewBox="0 0 14 14"><path d="M13 0.5 V13 H0.5 Z" fill="#d4d4d4"/></svg>
<svg style="left:1985px;top:800px;" width="28" height="24" viewBox="0 0 28 24"><path d="M1.8 9 V4.5 Q1.8 1.8 4.5 1.8 H9 Q11 1.8 12.5 3.5 L14.5 5.8 H23 Q25.8 5.8 25.8 8.5 V19.8 Q25.8 22.5 23 22.5 H4.5 Q1.8 22.5 1.8 19.8 Z M1.8 9.5 H10.5 Q12 9.5 13 8.3 L14.5 5.8" stroke="#e4d196" stroke-width="2" fill="none" stroke-linejoin="round"/></svg>
<div class="t" style="left:2024px;top:801px;font-size:24px;color:#f0f0f0;">dev</div>
<svg style="left:1978px;top:837.5px;" width="12" height="20" viewBox="0 0 12 20"><path d="M1.5 1.5 L9 9.8 L1.5 18 Z" stroke="#d0d0d0" stroke-width="2" fill="none" stroke-linejoin="miter"/></svg>
<svg style="left:2000px;top:840px;" width="12" height="15" viewBox="0 0 12 15"><path d="M3 7 V5 Q3 1.5 6 1.5 Q9 1.5 9 5 V7" stroke="#4aa8f8" stroke-width="2" fill="none"/><rect x="1" y="6.5" width="10" height="8" rx="1" fill="#4aa8f8"/></svg>
<svg style="left:2019px;top:836px;" width="26" height="24" viewBox="0 0 26 24"><rect x="2" y="2" width="22.5" height="19.5" rx="3" stroke="#e6e6e6" stroke-width="2" fill="#0e1f0e"/><text x="13.2" y="16.5" font-size="13.5" font-family="Liberation Mono" font-weight="bold" fill="#72e272" text-anchor="middle" letter-spacing="-1">C#</text></svg>
<div class="t" style="left:2058px;top:837px;font-size:24px;color:#f0f0f0;">ZhonTai.Module.Dev.Api</div>
<svg style="left:1978px;top:873.5px;" width="12" height="20" viewBox="0 0 12 20"><path d="M1.5 1.5 L9 9.8 L1.5 18 Z" stroke="#d0d0d0" stroke-width="2" fill="none" stroke-linejoin="miter"/></svg>
<svg style="left:2000px;top:876px;" width="12" height="15" viewBox="0 0 12 15"><path d="M3 7 V5 Q3 1.5 6 1.5 Q9 1.5 9 5 V7" stroke="#4aa8f8" stroke-width="2" fill="none"/><rect x="1" y="6.5" width="10" height="8" rx="1" fill="#4aa8f8"/></svg>
<svg style="left:2019px;top:872px;" width="26" height="24" viewBox="0 0 26 24"><rect x="2" y="2" width="22.5" height="19.5" rx="3" stroke="#e6e6e6" stroke-width="2" fill="#0e1f0e"/><text x="13.2" y="16.5" font-size="13.5" font-family="Liberation Mono" font-weight="bold" fill="#72e272" text-anchor="middle" letter-spacing="-1">C#</text></svg>
<div class="t" style="left:2058px;top:873px;font-size:24px;color:#f0f0f0;">ZhonTai.Module.Dev.Api.Contracts</div>
<svg style="left:1978px;top:909.5px;" width="12" height="20" viewBox="0 0 12 20"><path d="M1.5 1.5 L9 9.8 L1.5 18 Z" stroke="#d0d0d0" stroke-width="2" fill="none" stroke-linejoin="miter"/></svg>
<svg style="left:2000px;top:912px;" width="12" height="15" viewBox="0 0 12 15"><path d="M3 7 V5 Q3 1.5 6 1.5 Q9 1.5 9 5 V7" stroke="#4aa8f8" stroke-width="2" fill="none"/><rect x="1" y="6.5" width="10" height="8" rx="1" fill="#4aa8f8"/></svg>
<svg style="left:2017px;top:907px;" width="28" height="28" viewBox="0 0 28 28"><path d="M8 2 H22 Q26 2 26 6 V20 Q26 24 22 24 H16 M6 14 V6 Q6 2 10 2 M6 8 H26" stroke="#e0e0e0" stroke-width="2" fill="none"/><circle cx="9" cy="19.5" r="8" fill="#3d94ec"/><path d="M1 19.5 H17 M9 11.5 V27.5 M9 11.5 Q3.5 19.5 9 27.5 Q14.5 19.5 9 11.5 M2.5 15 H15.5 M2.5 24 H15.5" stroke="#1a2a44" stroke-width="1.3" fill="none"/></svg>
<div class="t" style="left:2058px;top:909px;font-size:24px;color:#f0f0f0;">ZhonTai.Module.Dev.Host</div>
<svg style="left:1944px;top:944.5px;" width="12" height="20" viewBox="0 0 12 20"><path d="M1.5 1.5 L9 9.8 L1.5 18 Z" stroke="#d0d0d0" stroke-width="2" fill="none" stroke-linejoin="miter"/></svg>
<svg style="left:1985px;top:943px;" width="28" height="24" viewBox="0 0 28 24"><path d="M1.8 9 V4.5 Q1.8 1.8 4.5 1.8 H9 Q11 1.8 12.5 3.5 L14.5 5.8 H23 Q25.8 5.8 25.8 8.5 V19.8 Q25.8 22.5 23 22.5 H4.5 Q1.8 22.5 1.8 19.8 Z M1.8 9.5 H10.5 Q12 9.5 13 8.3 L14.5 5.8" stroke="#e4d196" stroke-width="2" fill="none" stroke-linejoin="round"/></svg>
<div class="t" style="left:2024px;top:944px;font-size:24px;color:#f0f0f0;">im</div>
<svg style="left:1910px;top:980.5px;" width="12" height="20" viewBox="0 0 12 20"><path d="M1.5 1.5 L9 9.8 L1.5 18 Z" stroke="#d0d0d0" stroke-width="2" fill="none" stroke-linejoin="miter"/></svg>
<svg style="left:1951px;top:979px;" width="28" height="24" viewBox="0 0 28 24"><path d="M1.8 9 V4.5 Q1.8 1.8 4.5 1.8 H9 Q11 1.8 12.5 3.5 L14.5 5.8 H23 Q25.8 5.8 25.8 8.5 V19.8 Q25.8 22.5 23 22.5 H4.5 Q1.8 22.5 1.8 19.8 Z M1.8 9.5 H10.5 Q12 9.5 13 8.3 L14.5 5.8" stroke="#e4d196" stroke-width="2" fill="none" stroke-linejoin="round"/></svg>
<div class="t" style="left:1990px;top:980px;font-size:24px;color:#f0f0f0;">05.platform</div>
<div class="a" style="left:1888px;top:1464px;width:767px;height:46px;box-sizing:border-box;background:#252525;border-radius:0 0 6px 6px"></div>
<div class="a" style="left:1888px;top:1464px;width:191px;height:46px;box-sizing:border-box;background:#1f1f1f;border-radius:0 0 8px 8px"></div>
<svg style="left:0;top:0" width="2734" height="1562"><path d="M1889.25,144 Q1889.25,136.25 1897,136.25 H2646 Q2653.75,136.25 2653.75,144 V1465.25 H2086 Q2077.75,1465.25 2077.75,1472 V1501 Q2077.75,1508.75 2071,1508.75 H1896 Q1889.25,1508.75 1889.25,1502 Z" stroke="#948bd0" stroke-width="2.2" fill="none"/></svg>
<div class="t" style="left:1906px;top:1478px;font-size:23px;color:#f0f0f0;"><span style="font-size:0.96em">解决方案资源</span>...</div>
<div class="t" style="left:2128px;top:1479px;font-size:22.5px;color:#e0e0e0;">Easy Run</div>
<div class="t" style="left:2327px;top:1479px;font-size:22.5px;color:#e0e0e0;">Git <span style="font-size:0.96em">更改</span></div>
<div class="t" style="left:2537px;top:1478px;font-size:23px;color:#e0e0e0;"><span style="font-size:0.96em">属性</span></div>
<div class="t" style="left:2694px;top:135px;font-size:22px;color:#e8e8e8;transform:rotate(90deg);transform-origin:0 0"><span style="font-size:1em">通知</span></div>
<div class="a" style="left:2705px;top:135px;width:6px;height:44px;box-sizing:border-box;background:#404040;border-radius:3px"></div>
<div class="t" style="left:11px;top:1527px;font-size:24px;color:#f0f0f0;"><span style="font-size:0.96em">输出</span></div>
<div class="t" style="left:79px;top:1527px;font-size:24px;color:#f0f0f0;"><span style="font-size:0.96em">错误列表</span></div>
<div class="a" style="left:0px;top:1558px;width:2734px;height:4px;box-sizing:border-box;background:#161616"></div>
</body></html>
